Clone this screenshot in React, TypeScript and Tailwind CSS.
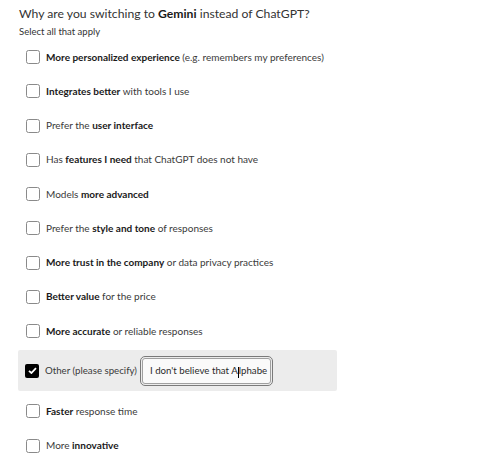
import React from "react";

type Part = { t: string; b?: boolean };
const rows: Part[][] = [
  [{ t: "More personalized experience", b: true }, { t: " (e.g. remembers my preferences)" }],
  [{ t: "Integrates better", b: true }, { t: " with tools I use" }],
  [{ t: "Prefer the " }, { t: "user interface", b: true }],
  [{ t: "Has " }, { t: "features I need", b: true }, { t: " that ChatGPT does not have" }],
  [{ t: "Models " }, { t: "more advanced", b: true }],
  [{ t: "Prefer the " }, { t: "style and tone", b: true }, { t: " of responses" }],
  [{ t: "More trust in the company", b: true }, { t: " or data privacy practices" }],
  [{ t: "Better value", b: true }, { t: " for the price" }],
  [{ t: "More accurate", b: true }, { t: " or reliable responses" }],
];
const after: Part[][] = [
  [{ t: "Faster", b: true }, { t: " response time" }],
  [{ t: "More " }, { t: "innovative", b: true }],
];

function Box({ checked }: { checked?: boolean }) {
  if (checked)
    return (
      <div className="w-[14px] h-[14px] rounded-[2px] bg-black flex items-center justify-center shrink-0">
        <svg width="9" height="7" viewBox="0 0 9 7">
          <path d="M1 3.8 L3.4 6 L8 1.2" stroke="white" strokeWidth="1.8" fill="none" />
        </svg>
      </div>
    );
  return <div className="w-[14px] h-[14px] rounded-[2.5px] border-[1.5px] border-[#8a8a8a] bg-white shrink-0" />;
}

function Label({ parts }: { parts: Part[] }) {
  return (
    <span className="text-[10px] text-[#3a3a3a] whitespace-pre">
      {parts.map((p, i) => (
        <span key={i} className={p.b ? "font-bold text-[#1a1a1a]" : ""}>
          {p.t}
        </span>
      ))}
    </span>
  );
}

function Row({ parts }: { parts: Part[] }) {
  return (
    <div className="h-[34.25px] flex items-center gap-[6px] pl-[26px]">
      <Box />
      <Label parts={parts} />
    </div>
  );
}

export default function App() {
  return (
    <div className="w-[480px] h-[457px] bg-white overflow-hidden" style={{ fontFamily: 'Lato, "Open Sans", sans-serif' }}>
      <div className="pl-[19px] pt-[5px] h-[40px]">
        <div className="text-[12.2px] leading-[18px] text-[#333]">
          Why are you switching to <span className="font-bold text-[#1a1a1a]">Gemini</span> instead of ChatGPT?
        </div>
        <div className="text-[9.5px] leading-[14px] text-[#333] mt-[2px]">Select all that apply</div>
      </div>
      {rows.map((r, i) => (
        <Row key={i} parts={r} />
      ))}
      <div className="mt-[2px] mb-[3px] ml-[18px] w-[319px] h-[41px] bg-[#ececec] rounded-[2px] flex items-center pl-[7px]">
        <Box checked />
        <span className="ml-[6px] text-[9.7px] text-[#3a3a3a]">Other (please specify)</span>
        <div className="ml-[3px] w-[133px] h-[30px] rounded-[5px] border border-[#7a7a7a] p-[1px]">
          <div className="w-full h-full rounded-[3px] border border-[#a0a0a0] bg-[#fafafa] flex items-center pl-[7px]">
            <span className="text-[9.7px] text-[#2a2a2a] whitespace-nowrap">
              I don't believe that A<span className="inline-block w-[1px] h-[11px] bg-black align-middle" />lphabe
            </span>
          </div>
        </div>
      </div>
      {after.map((r, i) => (
        <Row key={i} parts={r} />
      ))}
    </div>
  );
}
